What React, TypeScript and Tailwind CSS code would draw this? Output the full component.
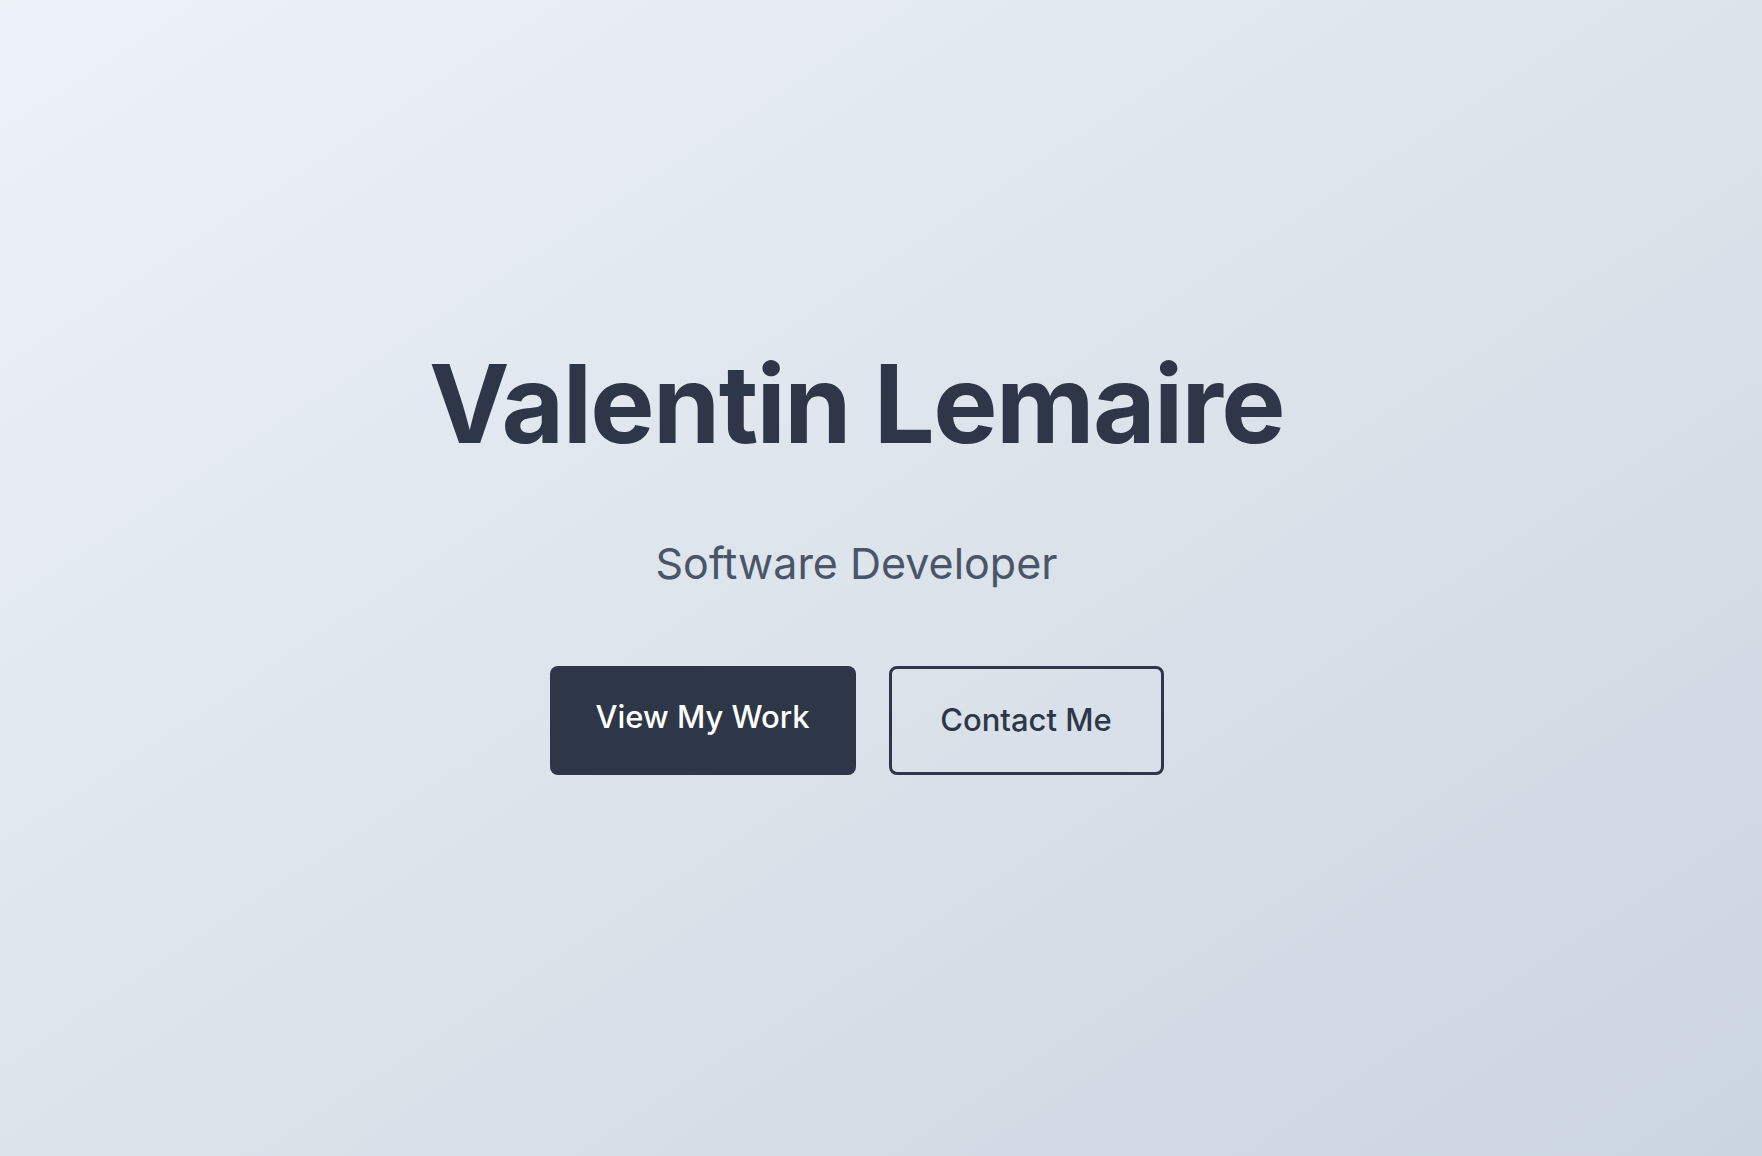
import React from "react";

export default function App() {
  return (
    <div
      className="min-h-screen w-full flex flex-col items-center justify-center pb-[31px] pr-[49px] bg-gradient-to-br from-[#edf2f7] to-[#cbd5e0] text-[#2d3748]"
      style={{ fontFamily: "Inter, 'Noto Sans', sans-serif" }}
    >
      <h1 className="text-[108px] font-bold tracking-[-0.015em] leading-none">Valentin Lemaire</h1>
      <p className="mt-[84px] text-[43px] leading-none text-[#4a5568]">Software Developer</p>
      <div className="mt-[81px] flex gap-[33px]">
        <button className="w-[306px] h-[109px] rounded-lg bg-[#2d3748] text-white text-[31px] font-medium pb-[7px]">
          View My Work
        </button>
        <button className="w-[275px] h-[109px] rounded-lg border-[3px] border-[#2d3748] text-[#2d3748] text-[31px] font-medium">
          Contact Me
        </button>
      </div>
    </div>
  );
}
